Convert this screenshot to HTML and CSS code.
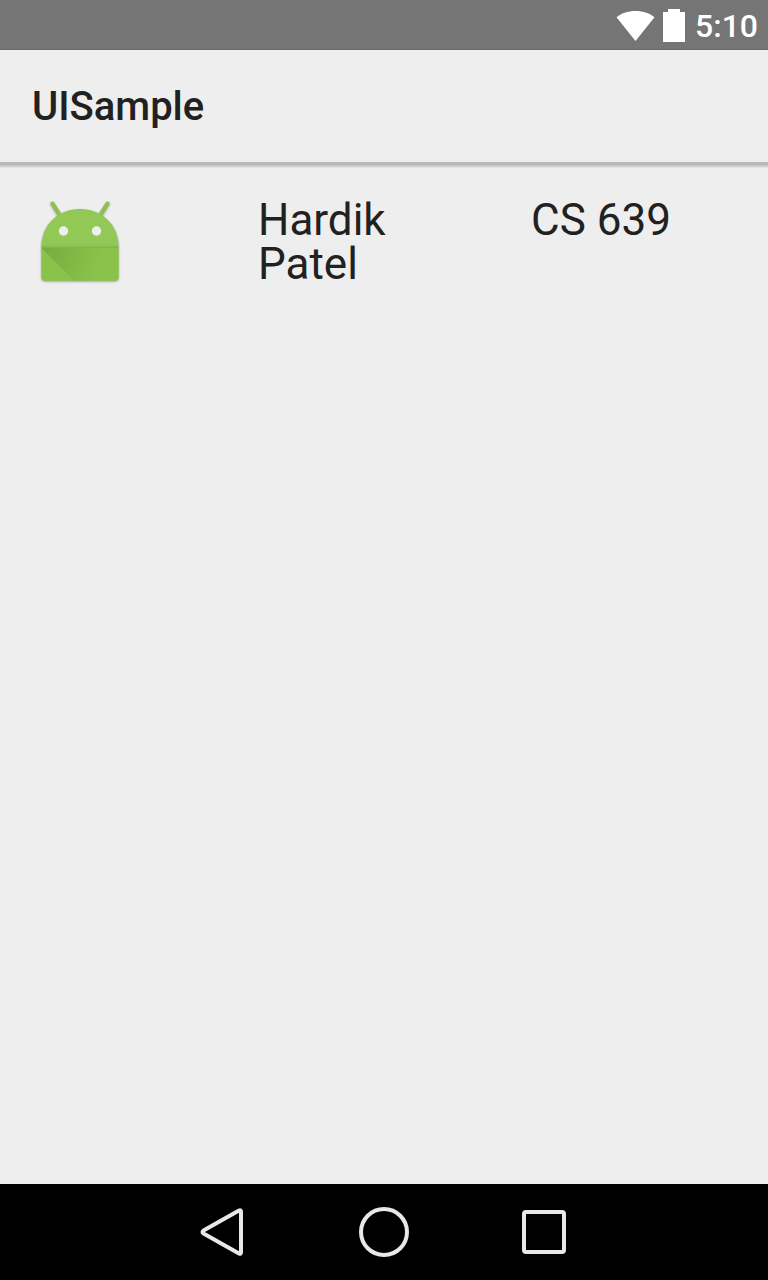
FILE: index.html
```html
<!DOCTYPE html>
<html lang="en">
<head>
<meta charset="utf-8">
<meta name="viewport" content="width=device-width, initial-scale=1">
<title>UISample</title>
<link rel="stylesheet" href="styles.css">
</head>
<body class="screen">
  <div class="status-bar">
    <svg class="wifi" viewBox="0 0 40 32" role="img" aria-label="Wi-Fi">
      <path d="M0.5 7C5 3 12 0.500 20 0.500S35 3 39.500 7L20 31.500Z" fill="#fff"/>
    </svg>
    <svg class="battery" viewBox="0 0 22 33" role="img" aria-label="Battery">
      <path d="M0 3H5V0H17V3H22V33H0Z" fill="#fff"/>
    </svg>
    <time class="clock">5:10</time>
  </div>
  <header class="app-bar">
    <h1 class="app-title">UISample</h1>
  </header>
  <main class="content">
    <div class="row">
      <svg class="launcher" viewBox="0 0 96 96" role="img" aria-label="Android">
        <defs>
          <linearGradient id="fold" gradientUnits="userSpaceOnUse" x1="10" y1="54" x2="66" y2="76">
            <stop offset="0" stop-color="#33691e" stop-opacity=".26"/>
            <stop offset="1" stop-color="#33691e" stop-opacity="0"/>
          </linearGradient>
          <linearGradient id="crease" x1="0" y1="0" x2="0" y2="1">
            <stop offset="0" stop-color="#33691e" stop-opacity="0"/>
            <stop offset="1" stop-color="#33691e" stop-opacity=".12"/>
          </linearGradient>
        </defs>
        <g class="robot">
          <path d="M20.500 9.500L29 23M75.500 9.500L67 23" fill="none" stroke="#8bc34a" stroke-width="4" stroke-linecap="round"/>
          <path d="M9.500 53C9.500 30 27 15 48 15S86.500 30 86.500 53V83Q86.500 86.500 82.500 86.500H13.500Q9.500 86.500 9.500 83Z" fill="#92c856"/>
        </g>
        <path d="M9.500 54H86.500V83Q86.500 86.500 82.500 86.500H13.500Q9.500 86.500 9.500 83Z" fill="#8bc34a"/>
        <path d="M9.500 54H86.500V83Q86.500 86.500 82.500 86.500H42Z" fill="url(#fold)"/>
        <path d="M9.500 50H86.500V53.500H9.500Z" fill="url(#crease)"/>
        <path d="M9.500 53H86.500V54H9.500Z" fill="#7fb548"/>
        <circle cx="31.500" cy="37" r="4.700" fill="#eee"/>
        <circle cx="64.500" cy="37" r="4.700" fill="#eee"/>
      </svg>
      <p class="name">Hardik Patel</p>
      <p class="course">CS 639</p>
    </div>
  </main>
  <nav class="nav-bar" aria-label="System">
    <button class="nav-button" type="button" aria-label="Back">
      <svg class="nav-icon" viewBox="0 0 56 56"><path d="M43 6.500Q45 5.500 45 8V48Q45 50.500 43 49.500L7.500 29.500Q5.500 28 7.500 26.500Z"/></svg>
    </button>
    <button class="nav-button" type="button" aria-label="Home">
      <svg class="nav-icon" viewBox="0 0 56 56"><circle cx="28" cy="28" r="23"/></svg>
    </button>
    <button class="nav-button" type="button" aria-label="Recent apps">
      <svg class="nav-icon" viewBox="0 0 56 56"><rect x="8" y="8" width="40" height="40" rx="2"/></svg>
    </button>
  </nav>
</body>
</html>
```
FILE: styles.css
```css
* {
  box-sizing: border-box;
}

.screen {
  display: flex;
  flex-direction: column;
  min-height: 100vh;
  margin: 0;
  background: #eee;
  color: #212121;
  font-family: Roboto, sans-serif;
}

.status-bar {
  display: flex;
  justify-content: flex-end;
  align-items: center;
  gap: 8px;
  height: 50px;
  padding: 2px 10px 0;
  border-bottom: 1px solid #6b6b6b;
  background: #757575;
  color: #fff;
}

.wifi {
  width: 39px;
  height: 32px;
}

.battery {
  width: 22px;
  height: 33px;
}

.clock {
  margin-left: 2px;
  font-size: 32px;
  font-weight: 500;
  line-height: 40px;
}

.app-bar {
  display: flex;
  align-items: center;
  height: 112px;
  padding: 2px 32px 0;
  box-shadow: 0 3px 0 #b8b8b8, 0 4px 0 #c4c4c4, 0 5px 0 #d4d4d4, 0 6px 0 #e2e2e2;
}

.app-title {
  margin: 0;
  font-size: 40px;
  font-weight: 500;
  line-height: 48px;
}

.content {
  flex: 1;
  padding: 32px;
}

.row {
  display: grid;
  grid-template-columns: 226fr 273fr 205fr;
  font-size: 44px;
  line-height: 44px;
}

.launcher {
  width: 96px;
  height: 96px;
}

.robot {
  filter: drop-shadow(0 1px 1px rgba(0, 0, 0, 0.4));
}

.name,
.course {
  margin: 0;
  padding-top: 4px;
}

.name {
  width: min-content;
}

.nav-bar {
  display: flex;
  justify-content: center;
  gap: 24px;
  height: 96px;
  background: #000;
}

.nav-button {
  display: grid;
  place-items: center;
  width: 136px;
  padding: 0;
  border: 0;
  background: none;
}

.nav-icon {
  width: 56px;
  height: 56px;
  fill: none;
  stroke: #e8e8e8;
  stroke-width: 4;
  stroke-linejoin: round;
}
```
